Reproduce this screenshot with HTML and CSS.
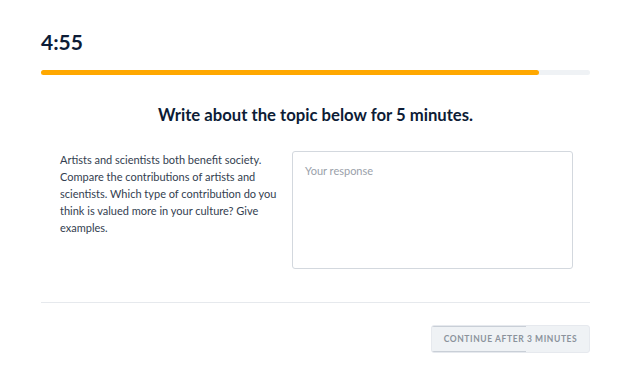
FILE: index.html
```html
<!DOCTYPE html>
<html lang="en">
<head>
    <meta charset="UTF-8">
    <meta name="viewport" content="width=device-width, initial-scale=1.0">
    <title>Writing Sample</title>
    <link rel="stylesheet" href="styles.css">
</head>
<body>
    <div id="main">
        <div class="timer">4:55</div>
        <div class="progress">
            <div class="progress-fill" style="width: 90.8%"></div>
        </div>

        <h1 class="title">Write about the topic below for 5 minutes.</h1>

        <div class="task">
            <p class="prompt">Artists and scientists both benefit society. Compare the contributions of artists and scientists. Which type of contribution do you think is valued more in your culture? Give examples.</p>
            <textarea class="answer" placeholder="Your response"></textarea>
        </div>

        <div class="footer">
            <button class="continue" disabled>
                <span class="continue-fill" style="width: 60%"></span>
                CONTINUE AFTER 3 MINUTES
            </button>
        </div>
    </div>
</body>
</html>
```

FILE: styles.css
```css
body {
    margin: 0;
    font-family: 'Lato', sans-serif;
    color: #0d1c36;
    background: white;
}

#main {
    padding: 30px 40px 0 41px;
}

.timer {
    font-size: 21px;
    font-weight: bold;
    line-height: 24px;
}

.progress {
    margin-top: 16px;
    height: 5px;
    border-radius: 3px;
    background-color: #eff2f5;
}

.progress-fill {
    height: 100%;
    border-radius: 3px;
    background-color: #ffa800;
}

.title {
    margin: 29px 0 0;
    text-align: center;
    font-size: 16.7px;
    line-height: 22px;
    font-weight: bold;
}

.task {
    display: flex;
    margin-top: 25px;
    padding: 0 17px 0 19px;
    gap: 10px;
}

.prompt {
    flex: 0 0 222px;
    margin: 0;
    font-size: 11px;
    line-height: 17px;
    color: #333e50;
}

.answer {
    flex: 1;
    height: 118px;
    box-sizing: border-box;
    border: 1px solid #d3d8de;
    border-radius: 3px;
    padding: 12px 12px;
    font-family: 'Lato', sans-serif;
    font-size: 11px;
    resize: none;
}

.answer::placeholder {
    color: #9aa1aa;
}

.footer {
    margin-top: 33px;
    border-top: 1px solid #e6e9ed;
    padding-top: 22px;
    display: flex;
    justify-content: flex-end;
}

.continue {
    position: relative;
    width: 159px;
    height: 28px;
    border: 1px solid #e6e9ee;
    border-radius: 3px;
    background-color: #eff2f5;
    color: #8b929c;
    font-family: 'Lato', sans-serif;
    font-size: 8.5px;
    font-weight: bold;
    letter-spacing: 0.6px;
    overflow: hidden;
}

.continue-fill {
    position: absolute;
    left: 0;
    top: 0;
    bottom: 0;
    border-top: 1px solid #c9cfd7;
    border-bottom: 1px solid #c9cfd7;
    box-sizing: border-box;
}
```
